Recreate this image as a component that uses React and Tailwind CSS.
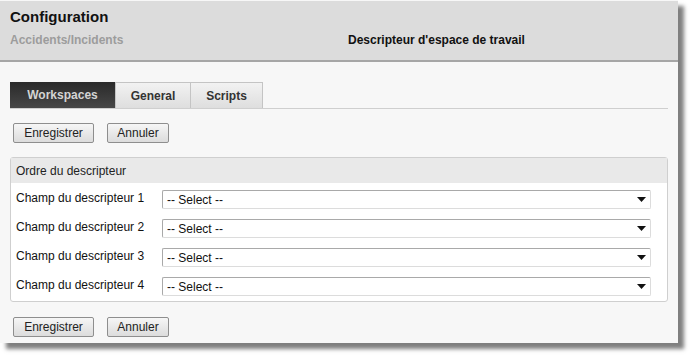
import { useState } from "react"

const fields = [
    "Champ du descripteur 1",
    "Champ du descripteur 2",
    "Champ du descripteur 3",
    "Champ du descripteur 4",
]

function Buttons() {
    return (
        <div className="flex gap-[13px] pl-[3px]">
            <button className="h-[20px] w-[81px] border border-[#8e8e8e] rounded-[2px] bg-gradient-to-b from-[#f6f6f6] to-[#dcdcdc] text-[12px] text-[#222] leading-none">
                Enregistrer
            </button>
            <button className="h-[20px] w-[62px] border border-[#8e8e8e] rounded-[2px] bg-gradient-to-b from-[#f6f6f6] to-[#dcdcdc] text-[12px] text-[#222] leading-none">
                Annuler
            </button>
        </div>
    )
}

function App() {
    const [tab, setTab] = useState("Workspaces")
    const tabs = ["Workspaces", "General", "Scripts"]

    return (
        <div className="w-[693px] h-[358px] bg-white font-['Liberation_Sans',Arial,sans-serif]">
            <div className="w-[678px] h-[343px] bg-[#f7f7f7] shadow-[6px_6px_4px_rgba(0,0,0,0.5)] flex flex-col">

                <div className="h-[61px] mt-[1px] bg-[#dcdcdc] border-b-2 border-[#a6a6a6] px-[10px] pt-[7px]">
                    <div className="text-[15px] font-bold text-[#111] leading-[17px]">
                        Configuration
                    </div>
                    <div className="flex mt-[6px]">
                        <div className="w-[338px] text-[12px] font-bold text-[#9c9c9c]">
                            Accidents/Incidents
                        </div>
                        <div className="text-[12px] font-bold text-[#111]">
                            Descripteur d'espace de travail
                        </div>
                    </div>
                </div>

                <div className="px-[10px] pt-[20px]">
                    <div className="flex w-[658px] border-b border-[#cfcfcf]">
                        {tabs.map((t) => (
                            <button
                                key={t}
                                onClick={() => setTab(t)}
                                className={
                                    t === tab
                                        ? "h-[26px] w-[105px] bg-gradient-to-b from-[#2a2a2a] to-[#474747] text-[12px] font-bold text-[#d4d4d4]"
                                        : t === "General"
                                            ? "h-[26px] w-[76px] border border-b-0 border-[#c4c4c4] bg-gradient-to-b from-[#f2f2f2] to-[#dedede] text-[12px] font-bold text-[#333]"
                                            : "h-[26px] w-[72px] border border-b-0 border-l-0 border-[#c4c4c4] bg-gradient-to-b from-[#f2f2f2] to-[#dedede] text-[12px] font-bold text-[#333]"
                                }
                            >
                                {t}
                            </button>
                        ))}
                    </div>

                    <div className="mt-[14px]">
                        <Buttons />
                    </div>

                    <div className="mt-[14px] w-[658px] border border-[#cfcfcf] rounded-[3px] bg-white">
                        <div className="h-[25px] bg-[#e9e9e9] px-[5px] flex items-center text-[12px] text-[#222]">
                            Ordre du descripteur
                        </div>
                        <div className="flex flex-col gap-[10px] pt-[7px] pb-[5px]">
                            {fields.map((f) => (
                                <div key={f} className="flex items-center h-[19px]">
                                    <div className="w-[151px] pl-[5px] text-[12px] text-[#111] -mt-[4px]">
                                        {f}
                                    </div>
                                    <div className="w-[489px] h-[19px] border border-[#a9a9a9] border-b-[#dcdcdc] border-r-[#dcdcdc] rounded-[2px] bg-white flex items-center justify-between px-[4px]">
                                        <span className="text-[12px] text-[#111]">-- Select --</span>
                                        <svg width="9" height="5" viewBox="0 0 9 5">
                                            <path d="M0 0H9L4.5 5Z" fill="#111" />
                                        </svg>
                                    </div>
                                </div>
                            ))}
                        </div>
                    </div>

                    <div className="mt-[15px]">
                        <Buttons />
                    </div>
                </div>

            </div>
        </div>
    )
}

export default App
